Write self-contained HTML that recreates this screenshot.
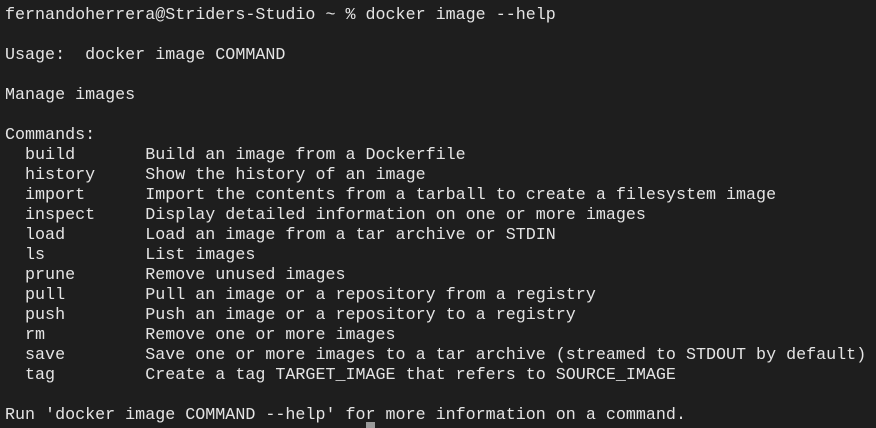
<!DOCTYPE html>
<html><head><style>
html,body{margin:0;padding:0;background:#1e1e1e;width:876px;height:428px;overflow:hidden}
pre{margin:0;position:absolute;left:5px;top:6px;font-family:"Liberation Mono",monospace;font-size:16.7px;line-height:20px;color:#e4e4e4;white-space:pre}
.cur{position:absolute;left:366px;top:422px;width:9px;height:6px;background:#9a9a9a}
</style></head><body>
<pre>fernandoherrera@Striders-Studio ~ % docker image --help

Usage:  docker image COMMAND

Manage images

Commands:
  build       Build an image from a Dockerfile
  history     Show the history of an image
  import      Import the contents from a tarball to create a filesystem image
  inspect     Display detailed information on one or more images
  load        Load an image from a tar archive or STDIN
  ls          List images
  prune       Remove unused images
  pull        Pull an image or a repository from a registry
  push        Push an image or a repository to a registry
  rm          Remove one or more images
  save        Save one or more images to a tar archive (streamed to STDOUT by default)
  tag         Create a tag TARGET_IMAGE that refers to SOURCE_IMAGE

Run 'docker image COMMAND --help' for more information on a command.</pre>
<div class="cur"></div>
</body></html>
